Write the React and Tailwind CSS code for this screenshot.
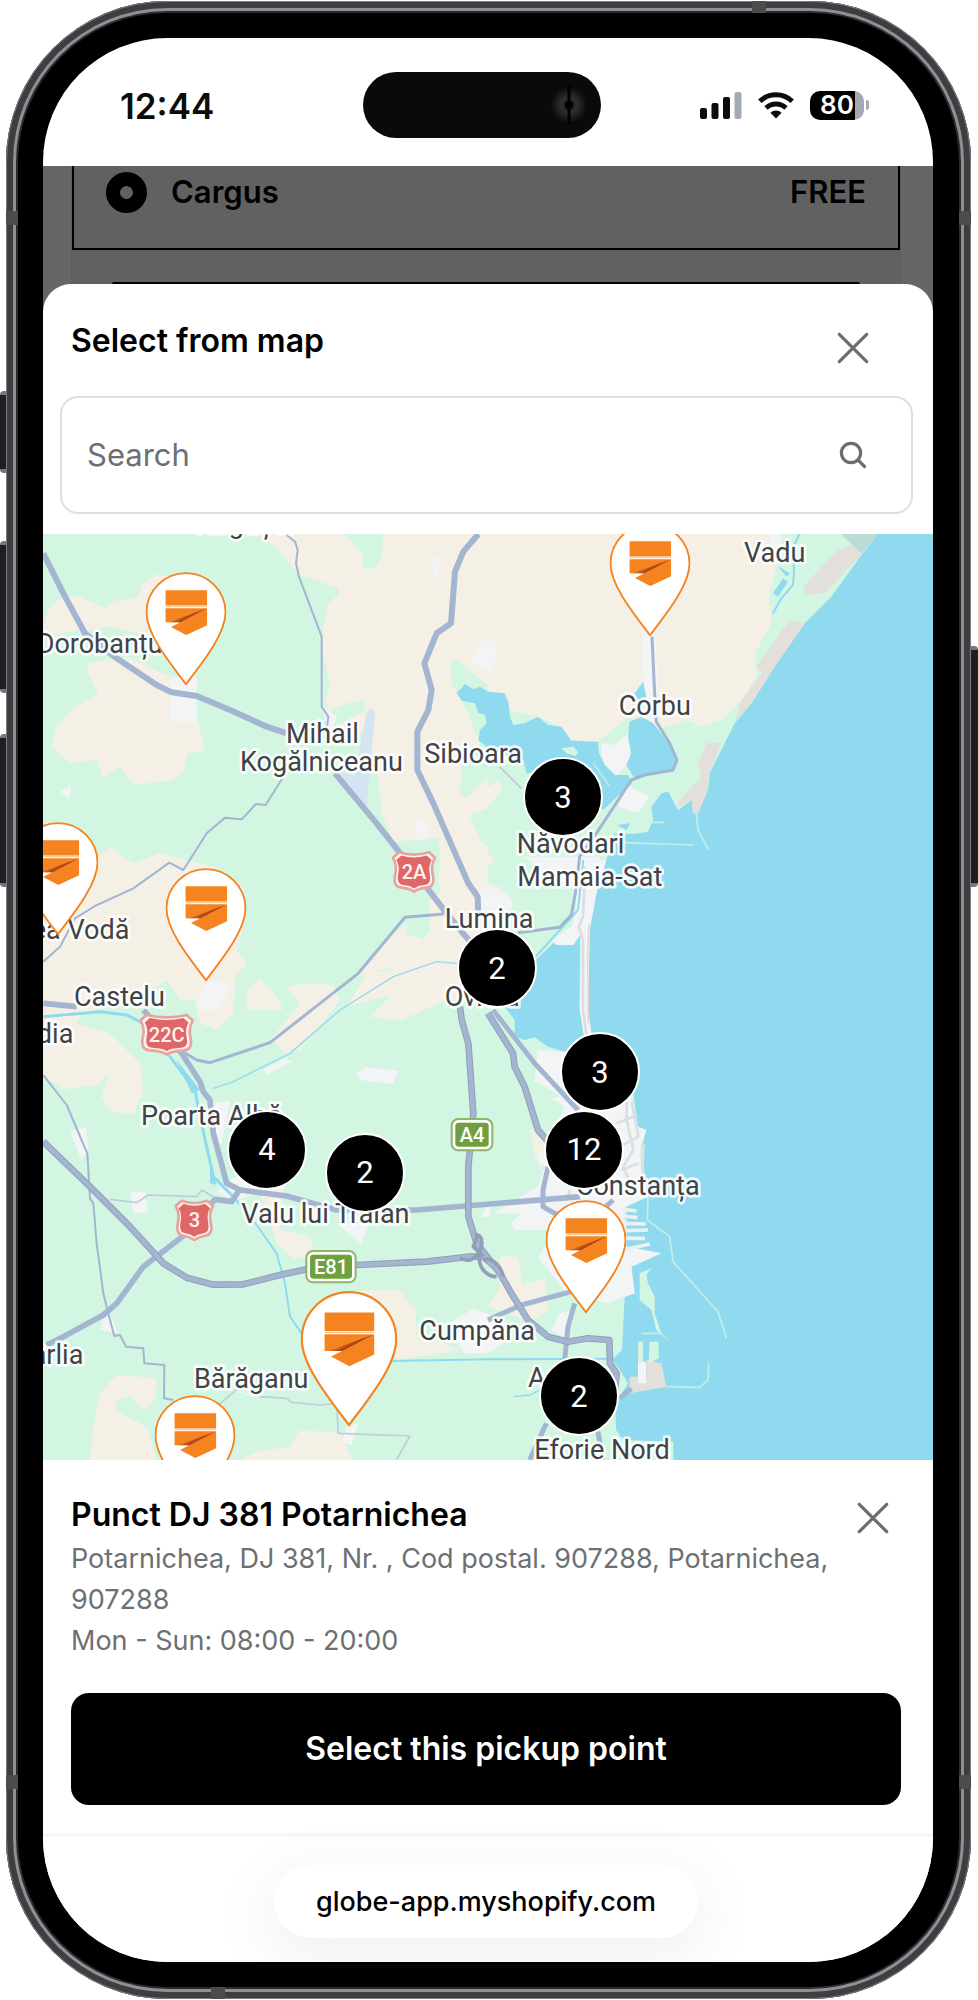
import React, { useState } from 'react';

const MAP_W = 890;
const MAP_H = 926;

const PINS = [
    { id: 'corbu', x: 607, y: 103 },
    { id: 'dorobantu', x: 143, y: 152 },
    { id: 'mircea-voda', x: 15, y: 402 },
    { id: 'castelu', x: 163, y: 448 },
    { id: 'constanta', x: 543, y: 780 },
    { id: 'potarnichea', x: 306, y: 893 },
    { id: 'baraganu', x: 152, y: 975 },
];

const CLUSTERS = [
    { id: 'navodari', x: 520, y: 263, count: 3 },
    { id: 'ovidiu', x: 454, y: 434, count: 2 },
    { id: 'mamaia', x: 557, y: 538, count: 3 },
    { id: 'poarta-alba', x: 224, y: 616, count: 4 },
    { id: 'city', x: 541, y: 616, count: 12 },
    { id: 'valu', x: 322, y: 639, count: 2 },
    { id: 'agigea', x: 536, y: 862, count: 2 },
];

const PLACES = [
    { name: 'Târgușor', x: 572, y: 8 },
    { name: 'Dorobanțu', x: 110, y: 370 },
    { name: 'Mihail', x: 858, y: 640 },
    { name: 'Kogălniceanu', x: 720, y: 723 },
    { name: 'Sibioara', x: 1273, y: 700 },
    { name: 'ea Vodă', x: 388, y: 1228, end: true },
    { name: 'Castelu', x: 222, y: 1428 },
    { name: 'Lumina', x: 1334, y: 1193 },
    { name: 'Ovidiu', x: 1334, y: 1428 },
    { name: 'Vadu', x: 2232, y: 97 },
    { name: 'Corbu', x: 1856, y: 555 },
    { name: 'Năvodari', x: 1550, y: 970 },
    { name: 'Mamaia-Sat', x: 1552, y: 1067 },
    { name: 'gidia', x: 220, y: 1538, end: true },
    { name: 'Poarta Albă', x: 423, y: 1785 },
    { name: 'Valu lui Traian', x: 724, y: 2078 },
    { name: 'Cumpăna', x: 1258, y: 2430 },
    { name: 'Bărăganu', x: 582, y: 2575 },
    { name: 'ârlia', x: 250, y: 2502, end: true },
    { name: 'Constanța', x: 2099, y: 1995, end: true },
    { name: 'Agigea', x: 1584, y: 2572 },
    { name: 'Eforie Nord', x: 1603, y: 2787 },
];

function CloseIcon() {
    return (
        <svg viewBox="0 0 32 32" className="size-8" fill="none" stroke="#6b6e6f" strokeWidth="3.2" strokeLinecap="round">
            <path d="M2.3 2.3 29.7 29.7M29.7 2.3 2.3 29.7" />
        </svg>
    );
}

function StatusBar() {
    return (
        <div className="grid grid-cols-[1fr_auto_1fr] items-center h-32 pr-3 pt-1.5">
            <div className="pl-[77px] pt-0.5 text-[35px] leading-none font-semibold text-[#0b0d0c]">12:44</div>
            <div className="w-[238px] h-[66px] rounded-full bg-[#080b0a] flex items-center justify-end pr-3">
                <svg viewBox="0 0 40 40" className="size-10">
                    <defs>
                        <radialGradient id="lens">
                            <stop offset="0" stopColor="#000" />
                            <stop offset="0.4" stopColor="#2e3032" />
                            <stop offset="1" stopColor="#0a0c0c" />
                        </radialGradient>
                    </defs>
                    <circle cx="20" cy="20" r="18" fill="url(#lens)" />
                    <path d="M18.5 1h3v38h-3z" fill="#000" />
                    <circle cx="20" cy="20" r="4" fill="#000" />
                </svg>
            </div>
            <div className="flex items-center justify-end pr-[52px] gap-4">
                <svg viewBox="0 0 42 28" className="w-[42px] h-7" fill="#0b0d0c">
                    <rect x="0" y="17" width="7" height="11" rx="2" />
                    <rect x="11.5" y="12" width="7" height="16" rx="2" />
                    <rect x="23" y="6" width="7" height="22" rx="2" />
                    <rect x="34.5" y="1" width="7" height="27" rx="2" fill="#a3a9b5" />
                </svg>
                <svg viewBox="0 0 36 28" className="w-9 h-7" fill="none" stroke="#0b0d0c" strokeWidth="5">
                    <path d="M1.8 10.3a23.5 23.5 0 0 1 32.4 0" />
                    <path d="M8 17a14.5 14.5 0 0 1 20 0" />
                    <path d="M18 27.4l-5.6-5.6a8 8 0 0 1 11.2 0z" fill="#0b0d0c" stroke="none" />
                </svg>
                <div className="flex items-center gap-0.5">
                    <div className="flex items-center justify-center w-[54px] h-[29px] rounded-[10px] bg-[linear-gradient(to_right,#000_45px,#a3a9b5_45px)] text-white text-[26px] leading-none font-semibold">80</div>
                    <div className="w-[3px] h-2.5 rounded-r-full bg-[#a3a9b5]" />
                </div>
            </div>
        </div>
    );
}

function DimmedCheckout() {
    return (
        <div className="pl-7 pr-8">
            <div className="bg-[#616161] border-x border-[#5a5c5b]">
                <label className="flex items-start h-21 px-8 pt-1.5 border-2 border-t-0 border-black text-[31px] leading-[40px] font-semibold text-black">
                    <input type="radio" name="shipping" defaultChecked className="appearance-none size-[41px] rounded-full border-[14px] border-black bg-[#616161]" />
                    <span className="pl-6">Cargus</span>
                    <span className="ml-auto">FREE</span>
                </label>
                <div className="h-8" />
                <div className="h-0.5 mx-10 rounded-t-full bg-black" />
            </div>
        </div>
    );
}

function Shield({ x, y, w, children }) {
    const r = w / 2;
    const outline = `M${-r} -42 L${-r + 18} -58 Q0 -44 ${r - 18} -58 L${r} -42 Q${r - 14} -18 ${r - 6} 12 Q${r} 46 ${r - 26} 48 Q14 50 0 60 Q-14 50 ${-r + 26} 48 Q${-r} 46 ${-r + 6} 12 Q${-r + 14} -18 ${-r} -42Z`;
    return (
        <g transform={`translate(${x} ${y})`}>
            <path d={outline} fill="#fdf3ec" stroke="#e6a3a0" strokeWidth="8" strokeLinejoin="round" />
            <path d={outline} transform="scale(0.84)" fill="#dd6867" />
            <text y="22" textAnchor="middle" fontSize="60" fontWeight="500" fill="#fdf3ec">{children}</text>
        </g>
    );
}

function GreenSign({ x, y, w, children }) {
    return (
        <g transform={`translate(${x} ${y})`}>
            <rect x={-w / 2} y="-47" width={w} height="94" rx="20" fill="#fbfdf7" stroke="#8fb36c" strokeWidth="6" />
            <rect x={-w / 2 + 11} y="-36" width={w - 22} height="72" rx="10" fill="#6ea042" />
            <text y="21" textAnchor="middle" fontSize="60" fontWeight="500" fill="#fff">{children}</text>
        </g>
    );
}

const MOTORWAYS = 'M130 1835 270 1970 390 2090 490 2200 560 2243 640 2264 730 2263 840 2235 920 2218 1070 2205 1280 2195 1410 2180 1450 2180 1490 2215M1380 1430 1385 1470 1405 1540 1420 1750 1405 1910V2060L1430 2140 1500 2230 1534 2290 1584 2370 1644 2420 1704 2435 1764 2425 1828 2430 1830 2500 1850 2530 1845 2580M1464 1450 1539 1570 1544 1610 1574 1670 1614 1800 1644 1835';

function BaseMap() {
    return (
        <svg viewBox="129 12 2670 2778" preserveAspectRatio="none" className="block w-full h-full font-[Roboto,sans-serif]">
            <rect x="129" y="12" width="2670" height="2778" fill="#d3f6e3" />

            {/* fields */}
            <g fill="#f4f0e5">
                <path d="M770 12 820 45 870 100 900 135 960 155 1015 175V195L985 220 970 290 965 330 975 400 990 470 975 515 990 540 1040 520 1090 510 1097 540 1055 562 1020 585 1030 600 1100 610 1130 700 1145 850 1180 935 1240 930 1315 922 1320 960 1315 1070 1325 1080 1290 1110V1200L1270 1230 1220 1210V1180L1165 1220 1060 1345 1170 1312 1190 1380 1160 1410 1110 1460 1200 1472 1340 1410H1480L1464 1300V955L1410 1020 1464 1010V950L1440 930 1408 855 1464 835V740L1400 805 1380 790 1385 700 1440 640 1400 540 1355 460 1350 400 1370 390 1464 465V485L1514 490 1530 540 1614 560 1684 590 1714 630 1794 635 1884 560 1964 600 2060 570 2104 590 2164 570 2234 500 2269 440 2264 370 2314 280 2309 180 2334 100 2329 12H1150L1145 80 1130 110 1095 118 1085 100 1092 75 1030 12Z" />
                <path d="M130 320V280L150 230 190 200 240 200 315 235 345 212 410 205 430 160 470 132 560 150V330L430 315 330 290 250 300 200 305Z" />
                <path d="M265 400 380 380 510 440 590 560 615 660 562 670 550 730 515 750 400 765 360 710 310 740 290 690 210 700 155 650 170 590 220 535 295 490 262 430Z" />
                <path d="M130 1015 290 985 330 950 400 1000 480 968 560 990 640 1010 730 1070 740 1160 710 1260 740 1300 705 1340 700 1450 650 1500 600 1480 585 1410H540L500 1350 420 1400 250 1450 230 1480 330 1510 420 1600 430 1680 400 1755 330 1740 305 1700 328 1630 290 1665 200 1678 130 1640Z" />
                <path d="M740 1440V1380L780 1345 830 1400 850 1440ZM860 1370 930 1360 1000 1365 1020 1410 980 1460 900 1560 860 1570 810 1530 860 1470 900 1420ZM760 1410 830 1410 780 1440ZM1040 1430 1100 1330 1180 1320 1190 1390Z" />
                <path d="M780 1990 850 1975 840 2100 930 2120 945 2180 880 2185 830 2140ZM1080 2282 1200 2280 1245 2340 1250 2410 1380 2460 1190 2490 1140 2400ZM270 2790 280 2690 300 2590 350 2535 470 2545 468 2605 435 2640 390 2600 345 2615 350 2645 440 2690 470 2790ZM720 2790 770 2765 870 2750 900 2700 1020 2710 1058 2790Z" />
                <path d="M1380 1145 1470 1130 1530 1170 1464 1230ZM1464 770 1500 750 1505 780 1464 830ZM1464 970 1485 985 1464 1010ZM1464 1060 1510 1075 1464 1120Z" />
                <path d="M1590 1798 1640 1815 1625 1915 1605 1880ZM1500 2180 1555 2180 1565 2265 1635 2245 1645 2340 1590 2375 1464 2330 1500 2270Z" />
            </g>

            {/* built-up areas */}
            <g fill="#f3f4f6">
                <path d="M512 440H590V575H510ZM180 785 212 765 210 805ZM1295 85 1325 82 1305 160ZM1410 395 1450 330H1470V420ZM1250 865 1285 890 1270 935 1245 920ZM960 520 1012 560 990 610ZM1440 1075 1475 1070V1140H1435Z" />
                <path d="M600 1440 590 1410 625 1350 697 1365 650 1440ZM340 1360H385V1390H340ZM1070 1630 1100 1612 1195 1622 1180 1662 1080 1650ZM790 1620 850 1588 878 1592 800 1635ZM210 1805 258 1790 265 1860 245 1890ZM390 1985 435 1985 445 2045 400 2050ZM640 1720 690 1712 665 1840H650ZM650 1985 690 1950 790 1900 860 1975 700 2010ZM1010 2080 1105 2080 1085 2145ZM300 2400 320 2330 350 2400V2410ZM1040 2690 1075 2680 1055 2745 1025 2735ZM1350 2380 1420 2335 1510 2370 1540 2420 1464 2470 1390 2470ZM690 2580 740 2590 800 2575 760 2600ZM1440 2060 1470 2020V2060Z" />
                <path d="M1804 640 1844 645 1884 610 1889 670 1899 690 1849 735 1809 700ZM1884 765 1949 800 1914 850 1854 830ZM1926 300H1964L1976 480 1980 560 1944 580 1939 500 1926 400ZM1464 350C1480 300 1500 360 1480 410L1464 430ZM2310 12H2345V60H2310Z" />
                <path d="M1574 980H1800L1780 1110 1740 1180 1720 1080 1610 1010ZM1464 1075 1520 1090 1540 1120 1500 1200 1464 1180Z" />
            </g>

            {/* airport */}
            <path d="M1100 545 1115 533 1125 548 1100 830 1070 800 1040 760 1020 720 1065 740Z" fill="#d4e4f2" />

            {/* sea and lakes */}
            <g fill="#90daef">
                <path d="M2634 12 2584 75 2494 200 2414 280 2324 410 2254 520 2204 580 2164 660 2129 730 2124 780 2094 850H2079L2076 810 2034 840 2005 785 1984 790 1954 830 1959 870 1944 905 1904 912 1844 910 1819 990 1789 1090 1769 1200 1764 1440 1772 1520 1900 1690 1914 1790 1939 1800 1926 1850 1934 1940 1944 2000 1880 2030 1879 2150 1984 2170 1894 2210 1904 2290 1874 2300 1866 2460 1836 2490 1854 2510 1884 2560 1846 2620 1848 2700 1870 2730 2020 2735V2790H2805V12Z" />
                <path d="M1370 490 1395 462 1420 478 1440 470 1464 485 1514 490 1526 520 1530 560 1540 585 1574 580 1614 560 1644 585 1684 590 1714 632 1794 635 1797 670 1815 705 1844 735 1884 735 1896 760 1809 840 1700 720 1580 730 1570 690 1530 680 1464 655 1435 630 1440 600 1460 580 1455 555 1435 548 1425 520 1385 512Z" />
                <path d="M1889 575 1924 560 1960 580 2009 645 2029 690 2014 722 1934 735 1904 745 1879 705 1894 670 1884 620ZM1904 490 1929 455 1939 500 1914 520Z" />
                <path d="M1607 1290 1664 1235 1724 1242 1729 1210 1740 1205 1739 1440 1754 1490 1794 1560 1694 1565 1644 1550 1604 1522 1574 1530 1544 1520 1544 1470 1514 1430 1560 1400Z" />
                <path d="M2349 145 2364 155 2334 200 2319 190ZM2334 108 2370 130 2360 140ZM1850 885 1890 880 1880 900ZM1820 1740 1860 1740 1840 1775ZM530 1590 600 1680 575 1690ZM630 1900 650 1965 630 1960Z" />
            </g>
            <path d="M1684 655 1720 650 1734 665 1728 678 1700 670Z" fill="#d3f6e3" />
            <path d="M1780 700 1830 770" stroke="#b7e8e4" strokeWidth="6" />

            {/* beaches */}
            <g fill="#e3dfda">
                <path d="M2514 60 2554 45 2584 75 2474 190 2419 195 2409 170ZM2369 270 2414 280 2324 410 2254 520 2206 575 2224 510 2284 430 2269 410ZM2119 640 2164 638 2124 740V780L2094 850H2079L2076 810 2034 832V815L2104 740 2094 700Z" />
                <path d="M2524 12H2634L2584 72Z" fill="#bcdad6" />
                <path d="M1889 2590V2540H1939V2490L1984 2500 1999 2570Z" />
                <path d="M1925 1850 1935 1840 1930 1935 1915 1925Z" />
            </g>

            {/* city */}
            <path d="M1614 1560 1690 1565 1794 1560 1894 1700 1910 1790 1939 1800 1920 1850 1924 1950 1944 2000 1870 2030 1879 2150 1984 2170 1894 2210 1904 2290 1874 2300 1824 2320 1700 2290 1614 2180 1670 2100 1544 2100 1534 2080 1564 2050 1480 2050 1614 1970 1634 1910 1610 1880 1664 1810 1694 1730 1654 1705 1684 1700 1604 1650ZM1680 2350 1715 2345 1690 2420 1655 2400Z" fill="#f3f4f6" />
            <path d="M1819 990 1789 1090 1769 1200 1764 1440 1776 1520H1752L1739 1440 1744 1210 1720 1245 1670 1245 1654 1232 1714 1190 1740 1100 1754 990Z" fill="#f3f4f6" />
            <path d="M1768 1180C1758 1260 1766 1360 1764 1480" fill="none" stroke="#ecd9cd" strokeWidth="5" />
            <g fill="none" stroke="#dcdfe1" strokeWidth="8">
                <path d="M1756 1010 1749 1160 1736 1190 1749 1230 1749 1440 1760 1520M1880 1715 1880 1770 1900 1860 1870 1910 1890 1960M1895 1715 1915 1820 1860 1850M1850 1780 1900 1760M1865 1920 1915 1900M1700 2010 1710 1980" />
            </g>
            <g fill="none" stroke="#eef0f2" strokeWidth="11">
                <path d="M1870 2038 1910 2043M1870 2058 1912 2063M1870 2080 1938 2082M1870 2102 1944 2100M1870 2125 1935 2125M1870 2160 1950 2142" />
            </g>
            <g fill="none" stroke="#c3eee5" strokeWidth="5">
                <path d="M1944 2000 1942 2070 2009 2120 2019 2195 2109 2295 2154 2345 2179 2425M1924 2410H1984M1999 2570 2099 2572 2124 2550 2126 2500M2089 850 2094 900 2126 960M1874 938 2079 945M1950 877H1994" />
            </g>
            <path d="M1919 2230 1954 2215 1939 2235 1944 2260 1964 2300V2350L1984 2410 2014 2440 1969 2400 1954 2340 1919 2310ZM1914 2435H1929V2495H1914ZM1949 2435H1976V2485L1946 2500Z" fill="#d3f6e3" />
            <path d="M1914 2495H1938V2560H1914Z" fill="#f3f4f6" />

            {/* canals */}
            <g fill="none" stroke="#90daef">
                <path d="M130 1460 300 1445 380 1455 430 1480 510 1580 585 1680 600 1760 620 1850 640 1940 700 2000" strokeWidth="9" />
                <path d="M700 2000 770 2085 830 2170 855 2260 870 2360 905 2410M1170 2493 1470 2488 1844 2486M1607 1280 1734 1140 1750 990M2398 12 2380 50 2382 125 2379 165 2344 205 2319 250" strokeWidth="6" />
                <path d="M640 1675 700 1655 870 1570 1020 1440 1180 1340 1310 1295 1370 1300M1540 2600 1590 2595 1620 2580" strokeWidth="4" />
            </g>

            {/* roads */}
            <g fill="none" stroke="#a3b5d1" strokeLinejoin="round">
                <path d="M130 70 190 190 255 310 350 385 470 465 515 487 590 498 690 540 800 590 860 610M1435 12 1390 65 1365 125 1353 280 1310 310 1273 400 1295 480 1285 540 1252 605V720L1300 820 1405 1060 1433 1100 1435 1160M1005 730 1130 880 1240 1020 1340 1150 1410 1235" strokeWidth="18" />
                <path d="M130 1420 230 1430M430 1440 545 1570 600 1655 610 1685 630 1710 640 1810 680 1960 720 1980 860 1998 1010 2040 1250 2040 1470 2022 1740 2000M715 1985 695 2015 645 2008 560 2110 430 2210 350 2320 310 2355 190 2420 140 2445" strokeWidth="17" />
                <path d="M1479 1440 1604 1600 1734 1740M1644 1910 1629 1980V2030L1664 2050 1764 2080 1839 2010M1724 2320 1704 2390 1694 2490M1639 2680 1589 2790M1794 2705 1809 2790M1859 2605 1894 2575M1464 2370 1564 2325 1714 2285" strokeWidth="15" />
                <path d="M860 15 885 35 893 60 888 100 897 140 965 320V530L985 560 980 600M850 740 797 825 768 822 725 868 675 863 620 910 550 1020 508 998 400 1075 285 1128 225 1165 180 1250 130 1295M130 1635 200 1725 262 1870 270 2005 280 2020 290 2140 310 2290 330 2370 343 2418 360 2415 378 2450 430 2455 433 2500 493 2505 492 2605 520 2610" strokeWidth="6" />
                <path d="M1330 1152 1215 1162 1075 1330 960 1420 810 1538 630 1598 590 1590 540 1560M1956 320 1964 490 1969 575 2009 640 2031 690 2019 720 1934 735 1894 750 1789 910 1739 980 1726 1090 1714 1155 1679 1192 1554 1208" strokeWidth="9" />
                <path d="M1499 710 1564 775M330 2008 410 2018 445 1995 590 2000 605 1980 640 2000M780 2600 860 2605 875 2617 960 2625 1010 2620 1015 2710 1230 2718 1190 2788M650 2630 720 2570" stroke="#c0ccd8" strokeWidth="5" />
            </g>

            {/* motorways, cased */}
            <g fill="none" strokeLinejoin="round">
                <path d={MOTORWAYS} stroke="#929fb8" strokeWidth="20" />
                <path d={MOTORWAYS} stroke="#a3b5d1" strokeWidth="14" />
                <path d="M1425 2115C1450 2110 1450 2150 1435 2170 1410 2200 1400 2190 1380 2185M1440 2170C1430 2210 1460 2240 1490 2240M1450 2190C1470 2180 1500 2200 1510 2240M1435 2110 1420 2150 1450 2180" stroke="#929fb8" strokeWidth="11" />
            </g>

            <g fontSize="81" fill="#3f4347" stroke="#ffffff" strokeOpacity="0.85" strokeWidth="16" strokeLinejoin="round" style={{ paintOrder: 'stroke' }}>
                {PLACES.map(p => (
                    <text key={p.name} x={p.x} y={p.y} textAnchor={p.end ? 'end' : 'start'}>{p.name}</text>
                ))}
            </g>

            <Shield x={1242} y={1025} w={126}>2A</Shield>
            <Shield x={500} y={1513} w={156}>22C</Shield>
            <Shield x={583} y={2070} w={112}>3</Shield>
            <GreenSign x={1416} y={1814} w={122}>A4</GreenSign>
            <GreenSign x={993} y={2210} w={148}>E81</GreenSign>
        </svg>
    );
}

function PinIcon() {
    return (
        <svg viewBox="0 0 242 340" className="block w-full h-full">
            <defs>
                <linearGradient id="fold" gradientUnits="userSpaceOnUse" x1="130" y1="114" x2="140" y2="133">
                    <stop offset="0" stopColor="#f5831f" />
                    <stop offset="0.9" stopColor="#a23a16" />
                </linearGradient>
            </defs>
            <path d="M121 335C70 268 3 185 3 121A118 118 0 0 1 239 121C239 185 172 268 121 335Z" fill="#fff" stroke="#f5831f" strokeWidth="5.5" />
            <path d="M60 54h124v46H60zM60 108h124v51l-62 29-46-24 28-14H60z" fill="#f5831f" />
            <path d="M60 102h124v3H60z" fill="#f9c08d" />
            <path d="M182 109 104 150H70Z" fill="url(#fold)" />
        </svg>
    );
}

function PickupMap({ selected, onSelect }) {
    return (
        <div className="relative w-full aspect-[890/926] overflow-hidden">
            <BaseMap />
            {PINS.map(p => (
                <button
                    key={p.id}
                    aria-label={p.id}
                    onClick={() => onSelect(p.id)}
                    className={`absolute -translate-x-1/2 -translate-y-full ${p.id === selected ? 'w-[97px] h-[136px]' : 'w-[81px] h-[114px]'}`}
                    style={{ left: `${(p.x / MAP_W) * 100}%`, top: `${(p.y / MAP_H) * 100}%` }}
                >
                    <PinIcon />
                </button>
            ))}
            {CLUSTERS.map(c => (
                <button
                    key={c.id}
                    className="absolute -translate-x-1/2 -translate-y-1/2 size-20 rounded-full bg-black border-2 border-white text-white text-[31px] leading-none font-[Roboto,sans-serif]"
                    style={{ left: `${(c.x / MAP_W) * 100}%`, top: `${(c.y / MAP_H) * 100}%` }}
                >
                    {c.count}
                </button>
            ))}
        </div>
    );
}

function PickupSheet() {
    const [query, setQuery] = useState('');
    const [selected, setSelected] = useState('potarnichea');

    return (
        <div className="bg-white rounded-t-[28px]">
            <div className="flex items-start justify-between pl-7 pr-16 pt-9 pb-6">
                <h1 className="text-[32px] leading-[42px] font-semibold">Select from map</h1>
                <button aria-label="Close" className="mt-3"><CloseIcon /></button>
            </div>
            <div className="pl-[17px] pr-5 pt-2 pb-5">
                <div className="flex items-center h-[118px] pl-[25px] pr-11 border-2 border-[#dfdfdf] rounded-[18px]">
                    <input
                        type="search"
                        aria-label="Search"
                        placeholder="Search"
                        value={query}
                        onChange={e => setQuery(e.target.value)}
                        className="flex-1 min-w-0 text-[31px] leading-10 outline-none placeholder:text-[#6d7072]"
                    />
                    <svg viewBox="0 0 28 28" className="size-7" fill="none" stroke="#6b6e6f" strokeWidth="3.2" strokeLinecap="round">
                        <circle cx="12" cy="12" r="9.6" />
                        <path d="M19 19 25.6 25.6" />
                    </svg>
                </div>
            </div>

            <PickupMap selected={selected} onSelect={setSelected} />

            {selected && (
                <div className="pl-7 pr-8 pt-8 pb-7">
                    <div className="flex items-start justify-between">
                        <div>
                            <h2 className="text-[32px] leading-[46px] font-semibold">Punct DJ 381 Potarnichea</h2>
                            <p className="text-[27px] leading-[41px] text-[#6d7072]">Potarnichea, DJ 381, Nr. , Cod postal. 907288, Potarnichea, 907288</p>
                            <p className="text-[27px] leading-[41px] text-[#6d7072]">Mon - Sun: 08:00 - 20:00</p>
                        </div>
                        <button aria-label="Dismiss" onClick={() => setSelected(null)} className="shrink-0 mt-2.5 mr-3"><CloseIcon /></button>
                    </div>
                    <button className="mt-8 w-full h-28 rounded-[18px] bg-black text-white text-[32px] font-semibold">Select this pickup point</button>
                </div>
            )}
        </div>
    );
}

function Band({ className }) {
    return <div className={`absolute bg-[#4b4c4e] ${className}`} />;
}

function SideKey({ className }) {
    return <div className={`absolute w-2 bg-[#1d1f20] border-y-4 border-[#75777a] ${className}`} />;
}

export default function App() {
    return (
        <div className="relative bg-white pt-px pl-1.5 pr-[7px] font-[Inter,sans-serif] text-black">
            <SideKey className="left-0 top-[391px] h-[82px] rounded-l-sm" />
            <SideKey className="left-0 top-[541px] h-[152px] rounded-l-sm" />
            <SideKey className="left-0 top-[734px] h-[153px] rounded-l-sm" />
            <SideKey className="right-0 top-[646px] h-[241px] rounded-r-sm" />
            <div className="relative p-3 rounded-[161px] bg-[#2b2c2e] shadow-[inset_0_0_0_1px_#7b7c7e,inset_0_0_0_7px_#3c3e40,inset_0_0_0_10px_#8d9096]">
                <Band className="left-0 top-[210px] w-3 h-3.5" />
                <Band className="right-0 top-[210px] w-3 h-3.5" />
                <Band className="left-0 bottom-[210px] w-3 h-3.5" />
                <Band className="right-0 bottom-[210px] w-3 h-3.5" />
                <Band className="right-[205px] top-0 w-3.5 h-3" />
                <Band className="left-[205px] bottom-0 w-3.5 h-3" />
                <div className="pl-[25px] pr-[26px] py-[25px] rounded-[149px] bg-black">
                    <div className="rounded-[124px] overflow-hidden bg-white">
                        <StatusBar />
                        <main className="bg-[#646766]">
                            <DimmedCheckout />
                            <PickupSheet />
                        </main>
                        <div className="flex justify-center pr-1 pt-7 pb-6 border-t-4 border-[#f7f7f7] bg-white">
                            <a href="https://globe-app.myshopify.com" className="px-[42px] rounded-full bg-white text-[27px] leading-[73px] font-medium shadow-[0_16px_60px_12px_rgba(0,0,0,0.05)]">globe-app.myshopify.com</a>
                        </div>
                    </div>
                </div>
            </div>
        </div>
    );
}
